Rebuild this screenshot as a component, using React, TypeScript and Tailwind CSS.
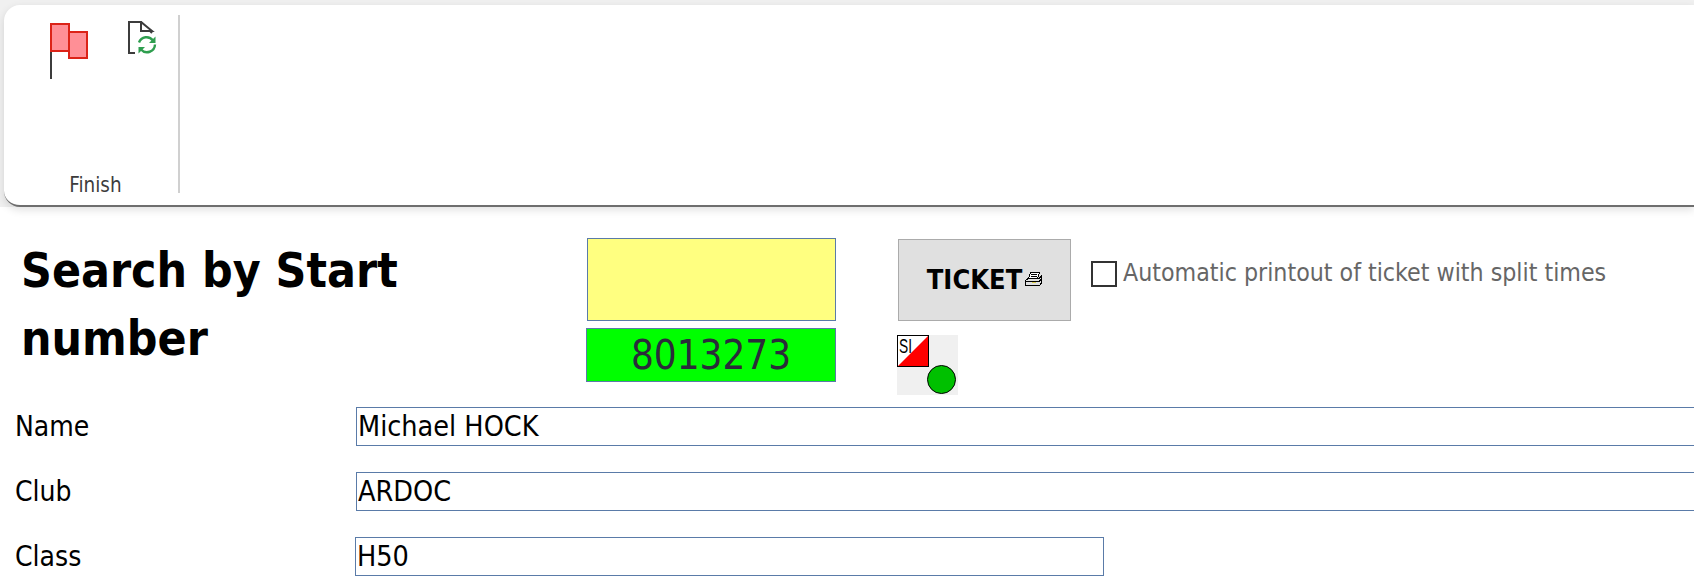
const font = "font-['DejaVu_Sans_Condensed','DejaVu_Sans',sans-serif] [font-stretch:condensed]"

function FlagIcon() {
  return (
    <svg width="44" height="59" viewBox="0 0 44 59" className="block">
      <path d="M1 2V56" stroke="#3c3c3c" strokeWidth="2" fill="none" />
      <rect x="1" y="1" width="18" height="27" fill="#ff8f96" stroke="#dc2318" strokeWidth="2" />
      <rect x="19" y="9" width="18" height="26" fill="#ff8f96" stroke="#dc2318" strokeWidth="2" />
    </svg>
  )
}

function RefreshDocIcon() {
  return (
    <svg width="30" height="36" viewBox="0 0 30 36" className="block">
      <path d="M7 32H1V1H13L24 12" fill="none" stroke="#3c3c3c" strokeWidth="2" />
      <path d="M13 1V10H24Z" fill="#fff" stroke="#3c3c3c" strokeWidth="2" />
      <circle cx="19" cy="24" r="10" fill="#fff" />
      <path d="M11 21.5A8 8 0 0 1 25 19.5" fill="none" stroke="#2f9e4f" strokeWidth="2.4" />
      <path d="M27 23.5A8 8 0 0 1 13 28.5" fill="none" stroke="#2f9e4f" strokeWidth="2.4" />
      <path d="M27.5 15.5V22H21Z" fill="#2f9e4f" />
      <path d="M10.5 32.5V26H17Z" fill="#2f9e4f" />
    </svg>
  )
}

function PrinterIcon() {
  return (
    <svg width="17" height="16" viewBox="0 0 17 16" className="block" shapeRendering="crispEdges">
      <path d="M5.5 .5H14.5L12.5 7H3.5Z" fill="#fff" stroke="#000" />
      <path d="M6 2.5H12M5.5 4.5H11.5" stroke="#000" />
      <path d="M.5 8.5L3 6.5H14L16.5 4V11L14.5 13.5H.5Z" fill="#e0e0e0" stroke="#000" />
      <path d="M1 9.5H14M14 9.5L16 7.5" stroke="#000" />
      <rect x="7" y="10" width="4" height="1" fill="#d8c84a" />
    </svg>
  )
}

function SiIcon() {
  return (
    <svg width="61" height="60" viewBox="0 0 61 60" className="block bg-[#f0f0f0]">
      <rect x=".5" y=".5" width="31" height="31" fill="#fff" stroke="#000" />
      <path d="M31 1V31H1Z" fill="#f00" />
      <circle cx="44.5" cy="44.5" r="14" fill="#00c000" stroke="#000" />
      <text x="2" y="18" fontFamily="'Liberation Sans',sans-serif" fontSize="20" textLength="13" lengthAdjust="spacingAndGlyphs">
        SI
      </text>
    </svg>
  )
}

function FieldRow({ label, value, narrow }: { label: string; value: string; narrow?: boolean }) {
  return (
    <div className="flex h-[39px] items-center">
      <label className={narrow ? 'w-[355px] shrink-0 pl-[15px] text-[28px] leading-[36px] text-black' : 'w-[356px] shrink-0 pl-[15px] text-[28px] leading-[36px] text-black'}>
        {label}
      </label>
      <input
        readOnly
        value={value}
        className={
          narrow
            ? 'h-[39px] w-[749px] border border-[#5a7ba8] bg-white pt-[2px] pl-[1px] text-[28.5px] text-black outline-none'
            : 'h-[39px] min-w-0 flex-1 border border-r-0 border-[#5a7ba8] bg-white pt-[2px] pl-[1px] text-[28.5px] text-black outline-none'
        }
      />
    </div>
  )
}

export default function App() {
  return (
    <div className={`h-[578px] w-[1694px] overflow-hidden bg-white ${font}`}>
      <div className="bg-[#f0f0f0] pl-[4px] pt-[5px]">
        <div className="flex h-[202px] rounded-l-[16px] border-b-2 border-[#6e6e6e] bg-white shadow-[0_3px_8px_rgba(0,0,0,0.12)]">
          <div className="my-[10px] flex h-[178px] w-[176px] flex-col border-r-2 border-[#d0d0d0]">
            <div className="flex flex-1 items-start pl-[46px] pt-[8px]">
              <FlagIcon />
              <div className="ml-[34px] -mt-[2px]">
                <RefreshDocIcon />
              </div>
            </div>
            <div className="translate-y-[5px] pl-[9px] text-center text-[20.5px] leading-[26px] text-[#3c3c3c]">Finish</div>
          </div>
        </div>
      </div>

      <div className="flex h-[200px] items-start pt-[31px]">
        <h1 className="w-[586px] shrink-0 -translate-y-[1px] pl-[21px] pr-[160px] text-[47.7px] font-bold leading-[68px] text-black">
          Search by Start number
        </h1>
        <div className="flex w-[250px] shrink-0 flex-col items-end gap-[7px]">
          <div className="h-[83px] w-[249px] border border-[#5a7ba8] bg-[#ffff80]" />
          <div className="flex h-[54px] w-[250px] items-center justify-center border border-[#5a7ba8] bg-[#00ff00] text-[40px] text-[#2b2b3a]">
            8013273
          </div>
        </div>
        <div className="ml-[61px] flex w-[175px] shrink-0 flex-col gap-[14px] pt-[1px]">
          <button className="ml-[1px] flex h-[82px] w-[173px] items-center justify-center gap-[3px] border border-[#ababab] bg-[#e0e0e0] text-[27px] font-bold text-black">
            TICKET
            <PrinterIcon />
          </button>
          <SiIcon />
        </div>
        <div className="ml-[19px] flex items-center gap-[6px] pt-[23px]">
          <span className="h-[26px] w-[26px] border-2 border-[#333]" />
          <span className="-translate-y-[2px] text-[24.7px] leading-[25px] text-[#666]">Automatic printout of ticket with split times</span>
        </div>
      </div>

      <div className="flex flex-col gap-[26px]">
        <FieldRow label="Name" value="Michael HOCK" />
        <FieldRow label="Club" value="ARDOC" />
        <FieldRow label="Class" value="H50" narrow />
      </div>
    </div>
  )
}
